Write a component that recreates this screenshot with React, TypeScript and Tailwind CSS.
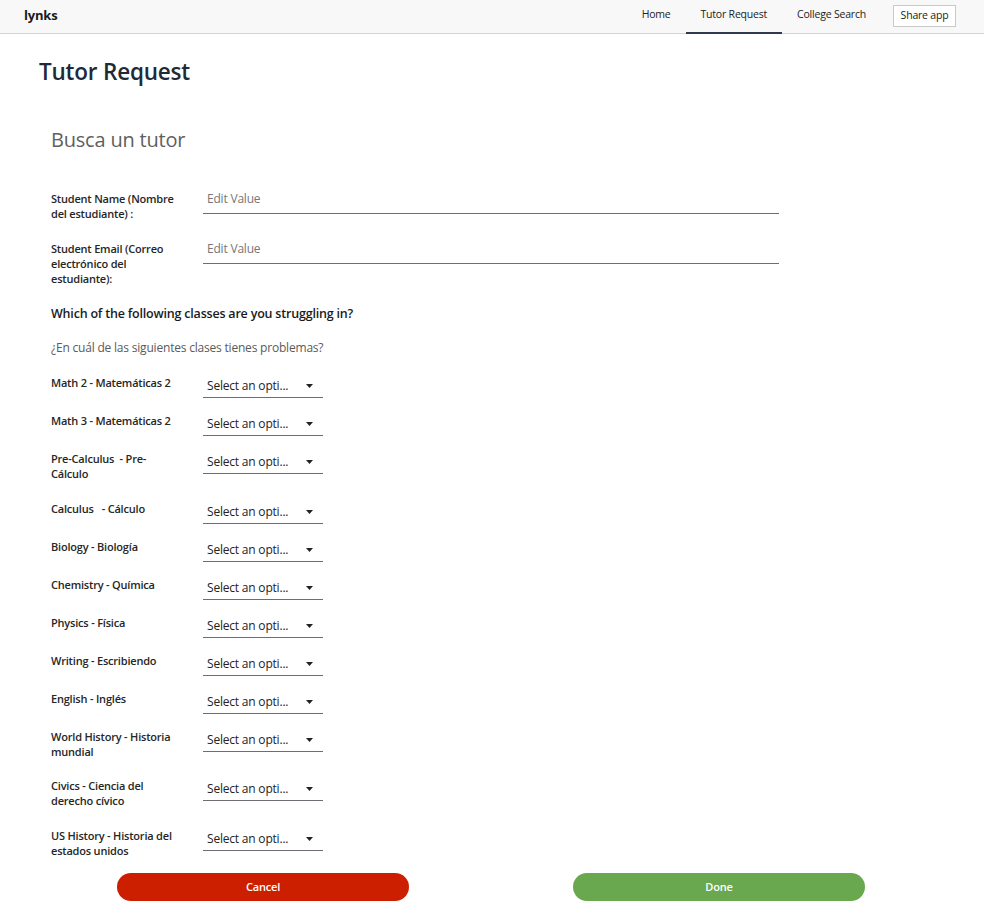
import React from "react";

const rows: { label: string; h: string }[] = [
  { label: "Math 2 - Matemáticas 2", h: "h-[38px]" },
  { label: "Math 3 - Matemáticas 2", h: "h-[38px]" },
  { label: "Pre-Calculus  - Pre-Cálculo", h: "h-[50px]" },
  { label: "Calculus   - Cálculo", h: "h-[38px]" },
  { label: "Biology - Biología", h: "h-[38px]" },
  { label: "Chemistry - Química", h: "h-[38px]" },
  { label: "Physics - Física", h: "h-[38px]" },
  { label: "Writing - Escribiendo", h: "h-[38px]" },
  { label: "English - Inglés", h: "h-[38px]" },
  { label: "World History - Historia mundial", h: "h-[49px]" },
  { label: "Civics - Ciencia del derecho cívico", h: "h-[50px]" },
  { label: "US History - Historia del estados unidos", h: "h-[36px]" },
];

function Select() {
  return (
    <div className="w-[120px] h-[24px] border-b border-[#6b6e73] flex items-center justify-between pl-[4px] pr-[10px] text-[12px] text-[#222]">
      <span>Select an opti...</span>
      <svg width="7" height="4" viewBox="0 0 7 4">
        <path d="M0 0h7L3.5 4z" fill="#222" />
      </svg>
    </div>
  );
}

export default function App() {
  return (
    <div className="min-h-[920px] bg-white font-['Open_Sans','Noto_Sans',sans-serif] text-[#222] tracking-[-0.2px]">
      <header className="h-[34px] bg-[#f8f8f8] border-b border-[#d4d4d4] flex items-stretch justify-between pl-[24px] pr-[28px]">
        <div className="flex items-center pb-[2px] font-bold text-[13px] text-[#1b1b1b]">lynks</div>
        <nav className="flex items-stretch text-[10.5px] text-[#222]">
          <a className="flex items-center pb-[3px] px-[15px]">Home</a>
          <a className="flex items-center pb-[3px] px-[15px] border-b-[2px] border-[#2f3b4c] mb-[-1px]">Tutor Request</a>
          <a className="flex items-center pb-[3px] px-[15px]">College Search</a>
          <div className="flex items-center pb-[2px] ml-[12px]">
            <button className="h-[22px] w-[63px] border border-[#c9c9c9] bg-white text-[10.5px] text-[#222]">Share app</button>
          </div>
        </nav>
      </header>

      <main className="mx-[39px]">
        <h1 className="mt-[24px] text-[22.5px] font-semibold text-[#1f2a38] leading-[28px]">Tutor Request</h1>

        <div className="pl-[12px]">
          <h2 className="mt-[41px] text-[20px] text-[#5f5f5f] font-normal leading-[26px]">Busca un tutor</h2>

          <div className="mt-[38px]">
            <div className="flex h-[50px]">
              <div className="w-[152px] pr-[20px] text-[11px] font-semibold leading-[15px] text-[#262626]">Student Name (Nombre del estudiante) :</div>
              <div className="w-[576px] h-[29px] mt-[-6px] border-b border-[#6b6e73] flex items-end pb-[5px] pl-[4px] text-[12px] text-[#777]">Edit Value</div>
            </div>
            <div className="flex h-[64px]">
              <div className="w-[152px] pr-[20px] text-[11px] font-semibold leading-[15px] text-[#262626]">Student Email (Correo electrónico del estudiante):</div>
              <div className="w-[576px] h-[29px] mt-[-6px] border-b border-[#6b6e73] flex items-end pb-[5px] pl-[4px] text-[12px] text-[#777]">Edit Value</div>
            </div>
          </div>

          <p className="text-[12.5px] font-semibold text-[#1b1b1b] leading-[18px]">Which of the following classes are you struggling in?</p>
          <p className="mt-[16px] text-[12px] text-[#5a5a5a] leading-[18px]">¿En cuál de las siguientes clases tienes problemas?</p>

          <div className="mt-[17px]">
            {rows.map((r) => (
              <div key={r.label} className={`flex items-start ${r.h}`}>
                <div className="w-[152px] pr-[28px] pt-[1px] whitespace-pre-wrap text-[11px] font-semibold leading-[15px] text-[#262626]">{r.label}</div>
                <Select />
              </div>
            ))}
          </div>
        </div>

        <div className="grid grid-cols-2 mt-[10px] ml-[-4px] w-[912px]">
          <div className="flex justify-center">
            <button className="w-[292px] h-[28px] rounded-full bg-[#cc1f00] text-white text-[11px] font-semibold">Cancel</button>
          </div>
          <div className="flex justify-center">
            <button className="w-[292px] h-[28px] rounded-full bg-[#6aa84f] text-white text-[11px] font-semibold">Done</button>
          </div>
        </div>
      </main>
    </div>
  );
}
